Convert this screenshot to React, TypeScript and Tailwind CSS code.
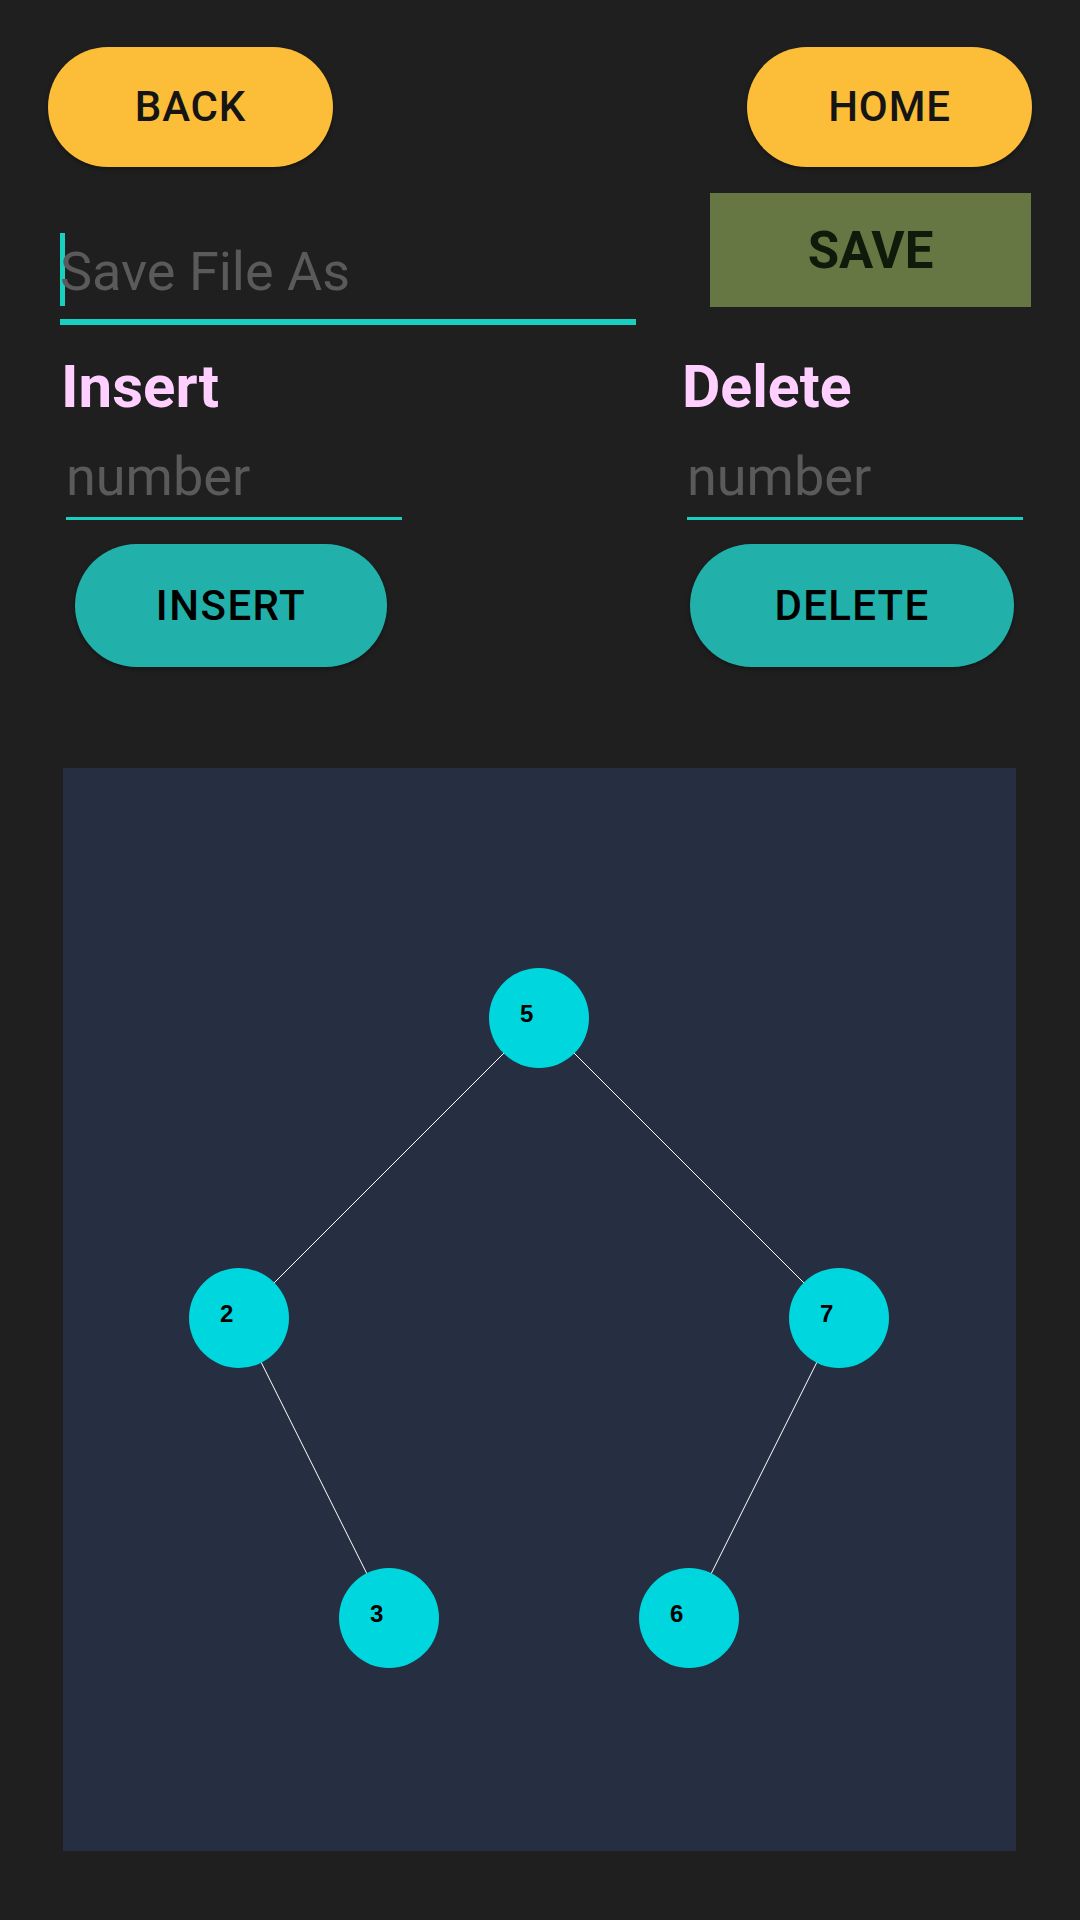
import React from "react";

const nodes = [
  { v: "5", x: 476, y: 250 },
  { v: "2", x: 176, y: 550 },
  { v: "7", x: 776, y: 550 },
  { v: "3", x: 326, y: 850 },
  { v: "6", x: 626, y: 850 },
];
const edges: [number, number][] = [
  [0, 1],
  [0, 2],
  [1, 3],
  [2, 4],
];

export default function App() {
  return (
    <div className="w-[1080px] h-[1920px] bg-[#1f1f1f] flex flex-col font-['Roboto',sans-serif] overflow-hidden">
      {/* top nav */}
      <div className="flex justify-between pl-[48px] pr-[48px] pt-[47px]">
        <button className="w-[285px] h-[120px] rounded-full bg-[#fcbe38] text-[#151515] text-[42px] font-medium leading-none tracking-[0.02em] shadow-[0_2px_4px_rgba(0,0,0,0.35)]">
          BACK
        </button>
        <button className="w-[285px] h-[120px] rounded-full bg-[#fcbe38] text-[#151515] text-[42px] font-medium leading-none tracking-[0.02em] shadow-[0_2px_4px_rgba(0,0,0,0.35)]">
          HOME
        </button>
      </div>

      {/* save row */}
      <div className="flex items-start mt-[26px]">
        <div className="ml-[60px] w-[576px] flex flex-col pt-[40px]">
          <div className="flex items-center h-[73px]">
            <div className="w-[5px] h-[73px] bg-[#19cfc0]" />
            <span className="text-[54px] leading-none text-[#5a5a5a] -ml-[5px] mt-[4px]">Save File As</span>
          </div>
          <div className="mt-[13px] h-[6px] bg-[#19cfc0]" />
        </div>
        <div className="ml-auto mr-[49px] w-[321px] h-[114px] bg-[#667743] flex items-center justify-center text-[51px] font-bold leading-none text-[#0f1a0b]">
          SAVE
        </div>
      </div>

      {/* insert / delete */}
      <div className="flex mt-[32px]">
        <div className="ml-[61px] w-[340px] flex flex-col">
          <div className="text-[60px] font-bold leading-none text-[#ffd0ff]">Insert</div>
          <div className="mt-[33px] ml-[5px] text-[54px] leading-none text-[#5a5a5a]">number</div>
          <div className="mt-[13px] ml-[5px] w-[336px] h-[3px] bg-[#19cfc0]" />
          <button className="mt-[24px] ml-[14px] w-[312px] h-[123px] rounded-full bg-[#21b1aa] text-black text-[42px] font-medium leading-none tracking-[0.035em] shadow-[0_2px_4px_rgba(0,0,0,0.35)]">
            INSERT
          </button>
        </div>
        <div className="ml-[281px] w-[340px] flex flex-col">
          <div className="text-[59px] font-bold leading-none text-[#ffd0ff]">Delete</div>
          <div className="mt-[34px] ml-[5px] text-[54px] leading-none text-[#5a5a5a]">number</div>
          <div className="mt-[13px] ml-[5px] w-[336px] h-[3px] bg-[#19cfc0]" />
          <button className="mt-[24px] ml-[8px] w-[324px] h-[123px] rounded-full bg-[#21b1aa] text-black text-[42px] font-medium leading-none tracking-[0.03em] shadow-[0_2px_4px_rgba(0,0,0,0.35)]">
            DELETE
          </button>
        </div>
      </div>

      {/* tree canvas */}
      <div className="mt-[101px] ml-[63px] w-[953px] h-[1083px] bg-[#252f41]">
        <svg width="953" height="1083" viewBox="0 0 953 1083">
          {edges.map(([a, b], i) => (
            <line
              key={i}
              x1={nodes[a].x}
              y1={nodes[a].y}
              x2={nodes[b].x}
              y2={nodes[b].y}
              stroke="#ffffff"
              strokeWidth={1}
            />
          ))}
          {nodes.map((n) => (
            <g key={n.v}>
              <circle cx={n.x} cy={n.y} r={50} fill="#00d6de" />
              <text
                x={n.x - 19}
                y={n.y + 4}
                fill="#000000"
                fontFamily="'Liberation Sans', Arial, sans-serif"
                fontWeight="bold"
                fontSize={24}
              >
                {n.v}
              </text>
            </g>
          ))}
        </svg>
      </div>
    </div>
  );
}
